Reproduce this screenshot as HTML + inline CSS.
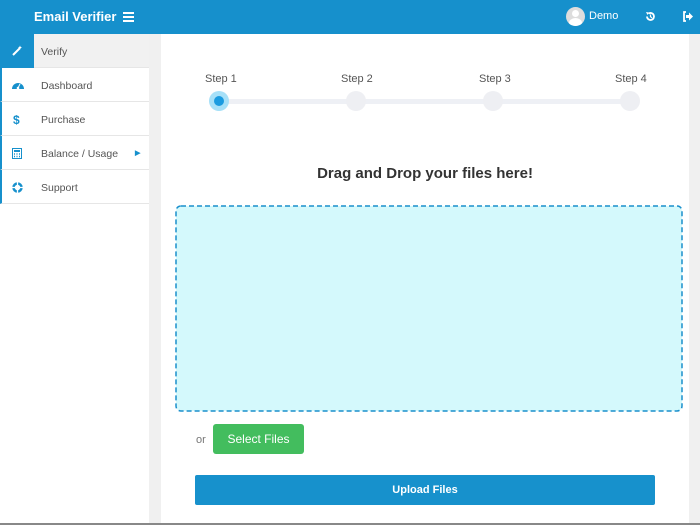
<!DOCTYPE html>
<html><head><style>
*{margin:0;padding:0;box-sizing:border-box}
body{width:700px;height:525px;overflow:hidden;font-family:"Liberation Sans",sans-serif;background:#f0f0f0;position:relative}
.hdr{position:absolute;left:0;top:0;width:700px;height:34px;background:#1690cc;color:#fff}
.side{position:absolute;left:0;top:34px;width:149px;height:491px;background:#fff}
.row{position:absolute;left:0;width:149px;height:34px;border-bottom:1px solid #e6e6e6;font-size:10.5px;color:#555;border-left:2px solid #1690cc}
.row span{position:absolute;left:39px;top:12px}
.row svg{position:absolute;left:10px;top:12px}
.content{position:absolute;left:161px;top:34px;width:528px;height:489px;background:#fff}
.lbl{position:absolute;font-size:11px;color:#555;top:73px}
.dot{position:absolute;width:20px;height:20px;border-radius:50%;background:#eeeff3;top:91px}
</style></head><body>
<div class="hdr">
<div style="position:absolute;left:34px;top:9px;font-size:13px;font-weight:bold">Email Verifier</div>
<div style="position:absolute;left:123px;top:12px;width:11px;height:2px;background:#fff;box-shadow:0 4px 0 #fff,0 8px 0 #fff"></div>
<div style="position:absolute;left:566px;top:7px;width:19px;height:19px;border-radius:50%;background:#ddd;overflow:hidden"><div style="position:absolute;left:6px;top:3px;width:7px;height:7px;border-radius:50%;background:#fff"></div><div style="position:absolute;left:3px;top:11px;width:13px;height:10px;border-radius:50%;background:#fff"></div></div>
<div style="position:absolute;left:589px;top:10px;font-size:11px">Demo</div>
<svg style="position:absolute;left:645px;top:11px" width="11" height="11" viewBox="0 0 11 11"><path d="M2 5.5A3.5 3.5 0 1 0 3.5 2.6" fill="none" stroke="#fff" stroke-width="1.8"/><path d="M1 1l3 0.5-1.5 2.5z" fill="#fff"/><path d="M5.5 3.5v2.2l1.5 1" fill="none" stroke="#fff" stroke-width="1.2"/></svg>
<svg style="position:absolute;left:682px;top:11px" width="12" height="11" viewBox="0 0 12 11"><path d="M4 1H2v9h2" fill="none" stroke="#fff" stroke-width="1.8"/><path d="M4 4h3V1.5L11 5.5 7 9.5V7H4z" fill="#fff"/></svg>
</div>
<div class="side">
<div style="position:absolute;left:0;top:0;width:149px;height:34px;background:#f1f1f1;border-bottom:1px solid #e6e6e6"><div style="position:absolute;left:0;top:0;width:34px;height:34px;background:#1690cc"><svg style="position:absolute;left:12px;top:11px" width="11" height="11" viewBox="0 0 11 11"><path d="M1 10L8 3" stroke="#fff" stroke-width="2"/><path d="M8 0.5l.6 1.4 1.4.6-1.4.6L8 4.5l-.6-1.4L6 2.5l1.4-.6z" fill="#fff"/></svg></div><span style="position:absolute;left:41px;top:12px;font-size:10.5px;color:#555">Verify</span></div>
<div class="row" style="top:34px"><svg width="12" height="10" viewBox="0 0 12 10"><path d="M0 9A6 6 0 0 1 12 9z" fill="#1690cc"/><circle cx="6" cy="8" r="1.3" fill="#fff"/><path d="M6 8L8 4" stroke="#fff" stroke-width="1"/></svg><span>Dashboard</span></div>
<div class="row" style="top:68px"><svg width="10" height="12" viewBox="0 0 10 12"><text x="1" y="10" font-size="12" font-weight="bold" fill="#1690cc" font-family="Liberation Sans">$</text></svg><span>Purchase</span></div>
<div class="row" style="top:102px"><svg width="10" height="11" viewBox="0 0 10 11"><rect x="0.5" y="0.5" width="9" height="10" fill="none" stroke="#1690cc"/><rect x="2" y="2" width="6" height="2" fill="#1690cc"/><path d="M2 6h1M4.5 6h1M7 6h1M2 8.5h1M4.5 8.5h1M7 8.5h1" stroke="#1690cc" stroke-width="1.5"/></svg><span>Balance / Usage</span><b style="position:absolute;left:133px;top:13px;font-size:7px;color:#1690cc">▶</b></div>
<div class="row" style="top:136px"><svg width="11" height="11" viewBox="0 0 11 11"><circle cx="5.5" cy="5.5" r="4" fill="none" stroke="#1690cc" stroke-width="2.5"/><path d="M5.5 0v11M0 5.5h11" stroke="#fff" stroke-width="1.3"/></svg><span>Support</span></div>
</div>
<div class="content"></div>
<div style="position:absolute;left:219px;top:99px;width:411px;height:5px;background:#eef0f5"></div>
<div class="lbl" style="left:205px">Step 1</div><div class="lbl" style="left:341px">Step 2</div><div class="lbl" style="left:479px">Step 3</div><div class="lbl" style="left:615px">Step 4</div>
<div class="dot" style="left:209px;background:#a6e0f8"><div style="position:absolute;left:5px;top:5px;width:10px;height:10px;border-radius:50%;background:#1a9be0"></div></div>
<div class="dot" style="left:346px"></div><div class="dot" style="left:483px"></div><div class="dot" style="left:620px"></div>
<div style="position:absolute;left:161px;width:528px;top:165px;text-align:center;font-size:15px;font-weight:bold;color:#333">Drag and Drop your files here!</div>
<svg style="position:absolute;left:175px;top:205px" width="508" height="207"><rect x="1" y="1" width="506" height="205" rx="5" fill="#d4f9fc" stroke="#1a8fcc" stroke-width="1.5" stroke-dasharray="5 3"/></svg>
<div style="position:absolute;left:196px;top:434px;font-size:11px;color:#777">or</div>
<div style="position:absolute;left:213px;top:424px;width:91px;height:30px;background:#43bd5e;border-radius:3px;color:#fff;font-size:12px;text-align:center;line-height:30px">Select Files</div>
<div style="position:absolute;left:195px;top:475px;width:460px;height:30px;background:#1791cc;border-radius:2px;color:#fff;font-size:11px;font-weight:bold;text-align:center;line-height:31px">Upload Files</div>
<div style="position:absolute;left:0;top:523px;width:700px;height:2px;background:#888"></div>
</body></html>
